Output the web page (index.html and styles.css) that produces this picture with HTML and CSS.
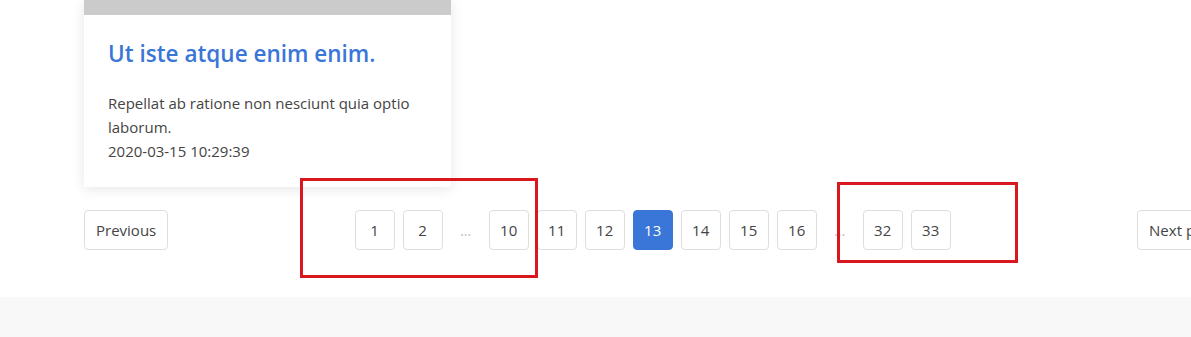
FILE: index.html
```html
<!DOCTYPE html>
<html lang="en">
<head>
    <meta charset="UTF-8">
    <title>Posts</title>
    <link rel="stylesheet" href="styles.css">
</head>
<body>
    <div class="main">
        <div class="card">
            <div class="card-img"></div>
            <div class="card-body">
                <h2 class="card-title">Ut iste atque enim enim.</h2>
                <p class="card-text">Repellat ab ratione non nesciunt quia optio laborum.</p>
                <div class="card-date">2020-03-15 10:29:39</div>
            </div>
        </div>

        <nav class="pager">
            <a href="#" class="page-btn">Previous</a>
            <div class="pages">
                <a href="#" class="page-btn num">1</a>
                <a href="#" class="page-btn num">2</a>
                <span class="dots">...</span>
                <a href="#" class="page-btn num">10</a>
                <a href="#" class="page-btn num">11</a>
                <a href="#" class="page-btn num">12</a>
                <a href="#" class="page-btn num active">13</a>
                <a href="#" class="page-btn num">14</a>
                <a href="#" class="page-btn num">15</a>
                <a href="#" class="page-btn num">16</a>
                <span class="dots">...</span>
                <a href="#" class="page-btn num">32</a>
                <a href="#" class="page-btn num">33</a>
            </div>
            <a href="#" class="page-btn">Next page</a>
        </nav>
    </div>

    <footer class="footer"></footer>

    <!-- annotation boxes -->
    <div class="mark mark-left"></div>
    <div class="mark mark-right"></div>
</body>
</html>
```

FILE: styles.css
```css
body {
    margin: 0;
    background-color: #fff;
    font-family: 'Open Sans', 'Liberation Sans', sans-serif;
    color: #444;
    overflow: hidden;
}

.main {
    width: 1148px;
    padding-left: 84px;
    padding-bottom: 47px;
}

.card {
    width: 367px;
    background: #fff;
    box-shadow: 0 2px 12px rgba(0, 0, 0, 0.1);
}

.card-img {
    height: 15px;
    background-color: #cbcbcb;
}

.card-body {
    padding: 24px 24px 24px 24px;
}

.card-title {
    margin: 0 0 22px 0;
    font-size: 22.5px;
    font-weight: 600;
    line-height: 30px;
    color: #3a76d8;
}

.card-text {
    margin: 0;
    font-size: 15px;
    line-height: 24px;
}

.card-date {
    font-size: 15px;
    line-height: 24px;
}

.pager {
    display: flex;
    justify-content: space-between;
    align-items: center;
    margin-top: 23px;
}

.pages {
    display: flex;
    align-items: center;
    gap: 8px;
}

.page-btn {
    display: flex;
    justify-content: center;
    align-items: center;
    height: 38px;
    padding: 0 11px;
    border: 1px solid #dedede;
    border-radius: 4px;
    font-size: 15px;
    color: #444;
    text-decoration: none;
    white-space: nowrap;
}

.page-btn.num {
    width: 38px;
    padding: 0;
}

.page-btn.active {
    background-color: #3a76d8;
    border-color: #3a76d8;
    color: #fff;
}

.dots {
    width: 30px;
    text-align: center;
    font-size: 14px;
    color: #bbb;
}

.footer {
    height: 40px;
    background-color: #f8f8f8;
}

.mark {
    position: absolute;
    border: 3px solid #d9171e;
}

.mark-left {
    left: 300px;
    top: 178px;
    width: 232px;
    height: 94px;
}

.mark-right {
    left: 837px;
    top: 182px;
    width: 175px;
    height: 75px;
}
```
